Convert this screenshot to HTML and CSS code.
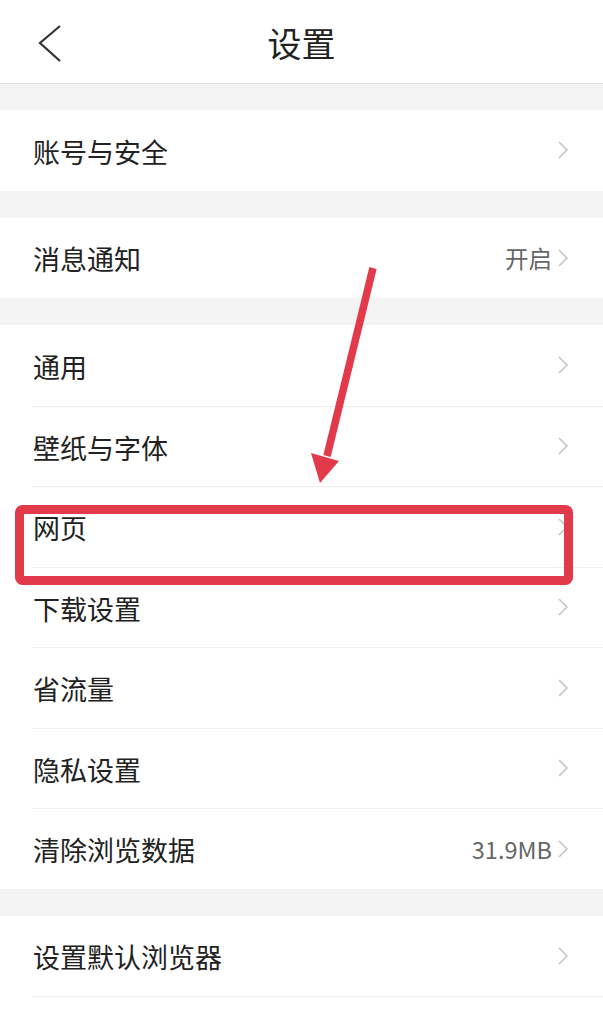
FILE: index.html
```html
<!DOCTYPE html>
<html lang="zh-CN">
<head>
<meta charset="utf-8">
<title>设置</title>
<link rel="stylesheet" href="styles.css">
</head>
<body>
<div class="page">
  <header class="topbar">
    <svg class="back" width="24" height="38" viewBox="0 0 24 38"><polyline points="22,1 2,18 22,36" fill="none" stroke="#333" stroke-width="2.2" stroke-linejoin="miter"/></svg>
    <h1 class="title">设置</h1>
  </header>

  <section class="group">
    <div class="row"><span class="label">账号与安全</span><span class="meta"><svg class="chev" viewBox="0 0 12 18"><polyline points="2,1 10,9 2,17"/></svg></span></div>
  </section>

  <section class="group">
    <div class="row"><span class="label">消息通知</span><span class="meta"><span class="value">开启</span><svg class="chev" viewBox="0 0 12 18"><polyline points="2,1 10,9 2,17"/></svg></span></div>
  </section>

  <section class="group">
    <div class="row"><span class="label">通用</span><span class="meta"><svg class="chev" viewBox="0 0 12 18"><polyline points="2,1 10,9 2,17"/></svg></span></div>
    <div class="row"><span class="label">壁纸与字体</span><span class="meta"><svg class="chev" viewBox="0 0 12 18"><polyline points="2,1 10,9 2,17"/></svg></span></div>
    <div class="row"><span class="label">网页</span><span class="meta"><svg class="chev" viewBox="0 0 12 18"><polyline points="2,1 10,9 2,17"/></svg></span></div>
    <div class="row"><span class="label">下载设置</span><span class="meta"><svg class="chev" viewBox="0 0 12 18"><polyline points="2,1 10,9 2,17"/></svg></span></div>
    <div class="row"><span class="label">省流量</span><span class="meta"><svg class="chev" viewBox="0 0 12 18"><polyline points="2,1 10,9 2,17"/></svg></span></div>
    <div class="row"><span class="label">隐私设置</span><span class="meta"><svg class="chev" viewBox="0 0 12 18"><polyline points="2,1 10,9 2,17"/></svg></span></div>
    <div class="row"><span class="label">清除浏览数据</span><span class="meta"><span class="value">31.9MB</span><svg class="chev" viewBox="0 0 12 18"><polyline points="2,1 10,9 2,17"/></svg></span></div>
  </section>

  <section class="group">
    <div class="row"><span class="label">设置默认浏览器</span><span class="meta"><svg class="chev" viewBox="0 0 12 18"><polyline points="2,1 10,9 2,17"/></svg></span></div>
    <div class="row"></div>
  </section>

  <svg class="annot" width="603" height="1020" viewBox="0 0 603 1020">
    <line x1="373" y1="268" x2="327" y2="456" stroke="#e23a4b" stroke-width="7.5" stroke-linecap="butt"/>
    <polygon points="311,453 339,461 320,483" fill="#e23a4b"/>
    <rect x="19.5" y="509.5" width="549" height="71" rx="3" ry="3" fill="none" stroke="#e23a4b" stroke-width="9"/>
  </svg>
</div>
</body>
</html>
```

FILE: styles.css
```css
* { box-sizing: border-box; }
html, body { margin: 0; padding: 0; }
body {
  background: #f3f3f3;
  font-family: "Noto Sans CJK SC", "Noto Sans", sans-serif;
  color: #222;
}
.page {
  position: relative;
  width: 603px;
  height: 1020px;
  overflow: hidden;
}
.topbar {
  height: 84px;
  background: #fff;
  border-bottom: 1px solid #e4e4e4;
  display: flex;
  align-items: center;
  justify-content: center;
  position: relative;
}
.back {
  position: absolute;
  left: 38px;
  top: 25px;
}
.title {
  margin: 0;
  font-size: 34px;
  font-weight: 400;
  color: #222;
  line-height: 1;
  padding-top: 2px;
}
.group {
  background: #fff;
  margin-top: 27px;
}
.group:first-of-type { margin-top: 26px; }
.row {
  height: 80.5px;
  margin-left: 33px;
  padding-right: 34px;
  display: flex;
  align-items: center;
  justify-content: space-between;
}
.row + .row { border-top: 1px solid #efefef; }
.label {
  font-size: 27px;
  line-height: 1;
  padding-top: 2px;
  color: #222;
}
.meta {
  display: flex;
  align-items: center;
  gap: 5px;
}
.value {
  font-size: 23.5px;
  line-height: 1;
  color: #666;
  padding-top: 2px;
}
.chev {
  width: 12px;
  height: 18px;
  fill: none;
  stroke: #c6c6c6;
  stroke-width: 1.6;
}
.annot {
  position: absolute;
  left: 0;
  top: 0;
  pointer-events: none;
}
```
